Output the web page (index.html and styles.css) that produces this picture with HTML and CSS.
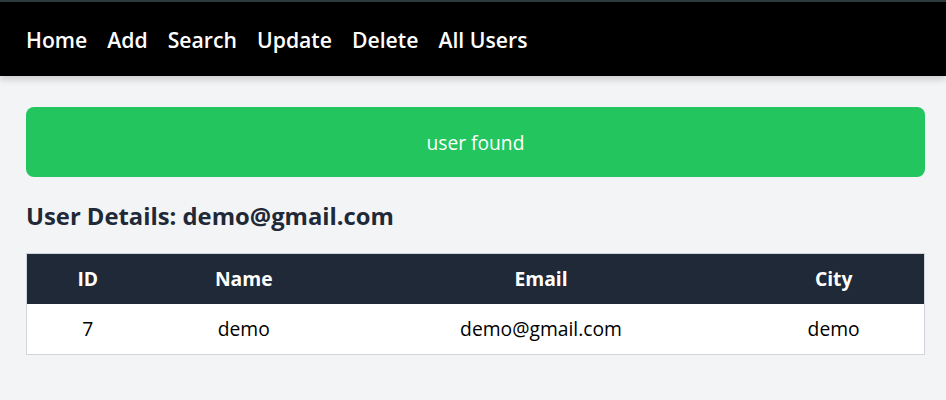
FILE: index.html
```html
<!DOCTYPE html>
<html>
<head>
<meta charset="utf-8">
<link rel="stylesheet" href="styles.css">
</head>
<body>
<nav class="nav">
  <a class="nav-link" href="#">Home</a>
  <a class="nav-link" href="#">Add</a>
  <a class="nav-link" href="#">Search</a>
  <a class="nav-link" href="#">Update</a>
  <a class="nav-link" href="#">Delete</a>
  <a class="nav-link" href="#">All Users</a>
</nav>
<main class="main">
  <div class="alert">user found</div>
  <h2 class="title">User Details: demo@gmail.com</h2>
  <table class="table">
    <thead>
      <tr>
        <th class="c-id">ID</th>
        <th class="c-name">Name</th>
        <th class="c-email">Email</th>
        <th class="c-city">City</th>
      </tr>
    </thead>
    <tbody>
      <tr>
        <td>7</td>
        <td>demo</td>
        <td>demo@gmail.com</td>
        <td>demo</td>
      </tr>
    </tbody>
  </table>
</main>
</body>
</html>
```
FILE: styles.css
```css
* { box-sizing: border-box; }
html, body { margin: 0; padding: 0; }
body {
  background: #f3f4f6;
  font-family: "Open Sans", "Noto Sans", sans-serif;
  color: #1f2937;
  border-top: 2px solid #2c3c3c;
}
.nav {
  background: #000;
  height: 74px;
  display: flex;
  align-items: center;
  gap: 20px;
  padding: 0 26px 0;
  box-shadow: 0 4px 6px rgba(0,0,0,0.15);
}
.nav-link {
  color: #fff;
  text-decoration: none;
  font-size: 21.2px;
  font-weight: 600;
}
.main {
  padding: 31px 21px 0 26px;
}
.alert {
  background: #22c55e;
  color: #fff;
  border-radius: 8px;
  height: 70px;
  display: flex;
  align-items: center;
  justify-content: center;
  font-size: 19.2px;
  font-weight: 500;
}
.title {
  margin: 24px 0 21px;
  font-size: 23.8px;
  font-weight: 700;
  line-height: 31px;
}
.table {
  width: 100%;
  border-collapse: collapse;
  border: 1px solid #d1d5db;
  background: #fff;
  font-size: 19.3px;
}
.table th {
  background: #1f2937;
  color: #fff;
  font-weight: 700;
  height: 50px;
  text-align: center;
  padding: 0;
}
.table td {
  height: 51px;
  text-align: center;
  color: #000;
  padding: 0;
}
.c-id { width: 122px; }
.c-name { width: 190px; }
.c-email { width: 404px; }
.c-city { width: 181px; }
```
